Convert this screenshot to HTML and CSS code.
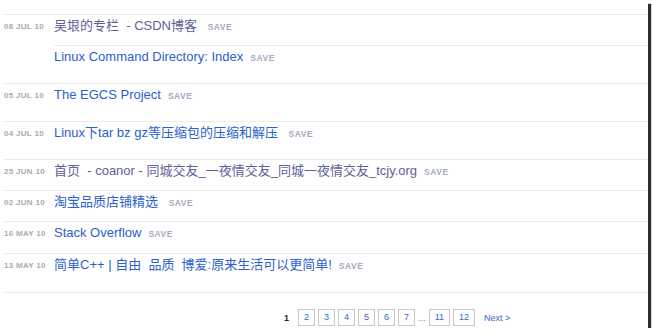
FILE: index.html
```html
<!DOCTYPE html>
<html>
<head>
<meta charset="utf-8">
<link rel="stylesheet" href="styles.css">
</head>
<body>
<div class="frame">
  <div class="list">
    <div class="day">
      <div class="date">08 JUL 10</div>
      <div class="entries">
        <div class="entry h30"><a class="title visited">吴垠的专栏&nbsp; - CSDN博客&nbsp;</a><span class="save">SAVE</span></div>
        <div class="entry h38"><a class="title">Linux Command Directory: Index</a><span class="save">SAVE</span></div>
      </div>
    </div>
    <div class="day">
      <div class="date">05 JUL 10</div>
      <div class="entries">
        <div class="entry h37"><a class="title">The EGCS Project</a><span class="save">SAVE</span></div>
      </div>
    </div>
    <div class="day">
      <div class="date">04 JUL 10</div>
      <div class="entries">
        <div class="entry h37"><a class="title">Linux下tar bz gz等压缩包的压缩和解压&nbsp;</a><span class="save">SAVE</span></div>
      </div>
    </div>
    <div class="day">
      <div class="date">25 JUN 10</div>
      <div class="entries">
        <div class="entry h30"><a class="title visited">首页&nbsp; - coanor - 同城交友_一夜情交友_同城一夜情交友_tcjy.org</a><span class="save">SAVE</span></div>
      </div>
    </div>
    <div class="day">
      <div class="date">02 JUN 10</div>
      <div class="entries">
        <div class="entry h30"><a class="title">淘宝品质店铺精选&nbsp;</a><span class="save">SAVE</span></div>
      </div>
    </div>
    <div class="day">
      <div class="date">16 MAY 10</div>
      <div class="entries">
        <div class="entry h31"><a class="title">Stack Overflow</a><span class="save">SAVE</span></div>
      </div>
    </div>
    <div class="day last">
      <div class="date">13 MAY 10</div>
      <div class="entries">
        <div class="entry h38"><a class="title">简单C++ | 自由&nbsp; 品质&nbsp; 博爱:原来生活可以更简单!</a><span class="save">SAVE</span></div>
      </div>
    </div>
  </div>
  <div class="pager">
    <span class="current">1</span>
    <a class="page">2</a>
    <a class="page">3</a>
    <a class="page">4</a>
    <a class="page">5</a>
    <a class="page">6</a>
    <a class="page">7</a>
    <span class="dots">...</span>
    <a class="page">11</a>
    <a class="page">12</a>
    <a class="next">Next &gt;</a>
  </div>
</div>
</body>
</html>
```
FILE: styles.css
```css
html, body {
  margin: 0;
  padding: 0;
  background: #fff;
}
body {
  font-family: "Liberation Sans", "Noto Sans CJK SC", sans-serif;
}
.frame {
  width: 648px;
  height: 328px;
  background: #fff;
  box-shadow: 3px 4px 1px #2e2e2e;
  overflow: hidden;
}
.list {
  padding-top: 14px;
  padding-left: 4px;
}
.day {
  display: grid;
  grid-template-columns: 50px 1fr;
  border-top: 1px solid #ececec;
}
.day.last {
  border-bottom: 1px solid #ececec;
}
.date {
  font-size: 8px;
  font-weight: bold;
  color: #aaa;
  letter-spacing: 0.3px;
  padding-top: 7px;
  line-height: 10px;
  white-space: nowrap;
}
.entry {
  box-sizing: border-box;
  display: flex;
  align-items: baseline;
  padding-top: 2px;
  line-height: 18px;
  font-size: 13px;
  white-space: nowrap;
  overflow: hidden;
}
.entry + .entry {
  border-top: 1px solid #ececec;
}
.h30 { height: 30px; }
.h31 { height: 31px; }
.h37 { height: 37px; }
.h38 { height: 38px; }
.title {
  font-size: 13px;
  color: #2c60cc;
  text-decoration: none;
  white-space: pre;
}
.title.visited {
  color: #5e6198;
}
.save {
  font-size: 8.5px;
  font-weight: bold;
  color: #a4aac4;
  letter-spacing: 0.5px;
  margin-left: 7px;
}
.pager {
  display: flex;
  align-items: center;
  padding-left: 284px;
  margin-top: 16px;
  font-size: 9px;
  height: 17px;
}
.current {
  font-weight: bold;
  color: #222;
  margin-right: 9px;
}
.page {
  box-sizing: border-box;
  min-width: 17px;
  height: 17px;
  padding: 0 5px;
  border: 1px solid #c8c8c8;
  color: #3a66c8;
  text-align: center;
  line-height: 15px;
  margin-right: 3px;
}
.dots {
  color: #888;
  margin: 0 3px 0 0;
}
.next {
  color: #3a66c8;
  margin-left: 6px;
}
```
